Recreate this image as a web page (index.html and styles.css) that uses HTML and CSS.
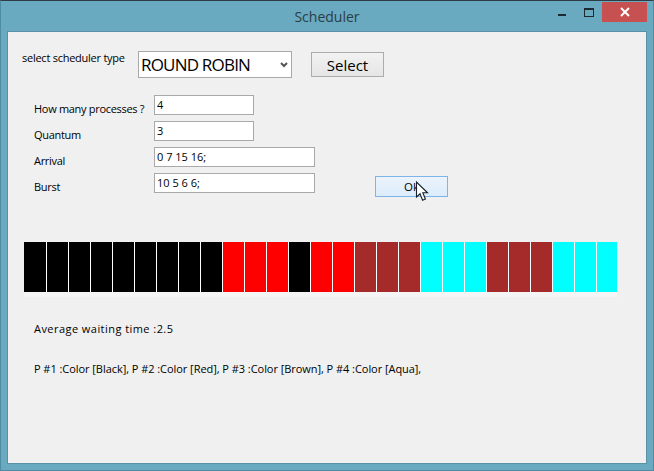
FILE: index.html
```html
<!DOCTYPE html>
<html>
  <head>
    <meta charset="UTF-8">
    <title>Scheduler</title>
    <link rel="stylesheet" href="styles.css">
  </head>
  <body>
    <div class="window">
      <div class="titlebar">
        <span class="title">Scheduler</span>
        <div class="controls">
          <span class="btn-min"></span>
          <span class="btn-max"></span>
          <span class="btn-close">
            <svg width="12" height="10" viewBox="0 0 12 10"><path d="M2 1l8 8M10 1l-8 8" stroke="#fff" stroke-width="2" fill="none"/></svg>
          </span>
        </div>
      </div>
      <div class="client">
        <div class="type-row">
          <label class="type-label">select scheduler type</label>
          <div class="select-wrap">
            <select class="type-select"><option>ROUND ROBIN</option></select>
            <svg class="chevron" width="8" height="6" viewBox="0 0 8 6"><path d="M1 1l3 3 3-3" stroke="#555" stroke-width="2" fill="none"/></svg>
          </div>
          <button class="select-btn">Select</button>
        </div>

        <div class="form">
          <div class="fields">
            <div class="field"><label>How many processes ?</label><input class="short" value="4"></div>
            <div class="field"><label>Quantum</label><input class="short" value="3"></div>
            <div class="field"><label>Arrival</label><input class="long" value="0 7 15 16;"></div>
            <div class="field"><label>Burst</label><input class="long" value="10 5 6 6;"></div>
          </div>
          <div class="ok-wrap">
            <button class="ok-btn">Ok</button>
            <svg class="cursor" width="14" height="21" viewBox="0 0 14 21"><path d="M1.5 1v15l3.5-3.2 2.6 6.4 2.8-1.2-2.6-6.2h4.7z" fill="#fff" stroke="#15202b" stroke-width="1.1"/></svg>
          </div>
        </div>

        <div class="chart">
          <div class="cells">
            <i class="black"></i><i class="black"></i><i class="black"></i><i class="black"></i><i class="black"></i><i class="black"></i><i class="black"></i><i class="black"></i><i class="black"></i>
            <i class="red"></i><i class="red"></i><i class="red"></i>
            <i class="black"></i>
            <i class="red"></i><i class="red"></i>
            <i class="brown"></i><i class="brown"></i><i class="brown"></i>
            <i class="aqua"></i><i class="aqua"></i><i class="aqua"></i>
            <i class="brown"></i><i class="brown"></i><i class="brown"></i>
            <i class="aqua"></i><i class="aqua"></i><i class="aqua"></i>
          </div>
        </div>

        <p class="avg">Average waiting time :2.5</p>
        <p class="legend">P #1 :Color [Black], P #2 :Color [Red], P #3 :Color [Brown], P #4 :Color [Aqua],</p>
      </div>
    </div>
  </body>
</html>
```

FILE: styles.css
```css
html, body { margin: 0; padding: 0; }
body { font: 11px "Open Sans", sans-serif; color: #000; }

.window {
  box-sizing: border-box;
  width: 654px;
  height: 471px;
  display: flex;
  flex-direction: column;
  padding: 0 6px 6px;
  background: #6aaac0;
  border: 1px solid #4f8ba1;
  border-top-color: #2e3d44;
}

.titlebar { position: relative; height: 30px; flex: none; text-align: center; }
.title { font-size: 14px; line-height: 32px; color: #2b3d47; }
.controls { position: absolute; top: 0; right: 0; display: flex; }
.btn-min { width: 8px; height: 2px; margin: 13px 18px 0 0; background: #1f2a30; }
.btn-max { box-sizing: border-box; width: 10px; height: 9px; margin: 7px 8px 0 0; border: 1px solid #1f2a30; border-top-width: 2px; }
.btn-close { width: 45px; height: 20px; margin-top: 1px; background: #c75050; display: flex; align-items: center; justify-content: center; }

.client {
  flex: 1;
  background: #f0f0f0;
  border: 1px solid #5b90a6;
  padding: 19px 0 0 14px;
}

.type-row { display: flex; align-items: flex-start; }
.type-label { width: 116px; margin-top: -1px; line-height: 16px; letter-spacing: -.25px; white-space: nowrap; }
.select-wrap { position: relative; }
.type-select {
  display: block;
  box-sizing: border-box;
  width: 154px;
  height: 27px;
  padding: 0 0 0 2px;
  appearance: none;
  background: #fff;
  border: 1px solid #a9a9a9;
  border-radius: 0;
  color: #000;
  font: 17px "Open Sans", sans-serif;
  letter-spacing: -.8px;
}
.chevron { position: absolute; right: 4px; top: 11px; }
.select-btn {
  box-sizing: border-box;
  width: 73px;
  height: 25px;
  margin: 1px 0 0 19px;
  padding: 0;
  background: linear-gradient(#f2f2f2, #e5e5e5);
  border: 1px solid #acacac;
  color: #000;
  font: 15px "Open Sans", sans-serif;
}

.form { display: flex; margin: 17px 0 0 12px; }
.fields { display: flex; flex-direction: column; gap: 6px; }
.field { display: flex; align-items: center; height: 20px; }
.field label { width: 120px; padding-top: 7px; letter-spacing: -.3px; white-space: nowrap; }
.field input {
  box-sizing: border-box;
  height: 20px;
  padding: 0 0 2px 2px;
  background: #fff;
  border: 1px solid #a9a9a9;
  border-radius: 0;
  color: #000;
  font: 11px "Open Sans", sans-serif;
  outline: none;
}
.short { width: 100px; }
.long { width: 161px; }

.ok-wrap { position: relative; margin: 81px 0 0 60px; }
.ok-btn {
  display: block;
  box-sizing: border-box;
  width: 73px;
  height: 21px;
  padding: 0;
  background: linear-gradient(#ecf4fc, #dcecfc);
  border: 1px solid #7eb4ea;
  color: #000;
  font: 11.5px "Open Sans", sans-serif;
}
.cursor { position: absolute; left: 40px; top: 5px; }

.chart { margin: 45px 0 0 2px; width: 593px; padding-bottom: 5px; background: #f5f5f5; }
.cells { display: flex; gap: 1px; height: 50px; background: #fff; }
.cells i { width: 21px; }
.cells i:first-child { width: 22px; }
.cells i:last-child { width: 20px; }
.black { background: #000; }
.red { background: #f00; }
.brown { background: #a52a2a; }
.aqua { background: #0ff; }

.avg, .legend { margin: 0 0 0 12px; line-height: 16px; }
.avg { margin-top: 24px; letter-spacing: .45px; }
.legend { margin-top: 24px; letter-spacing: -.05px; }
```
